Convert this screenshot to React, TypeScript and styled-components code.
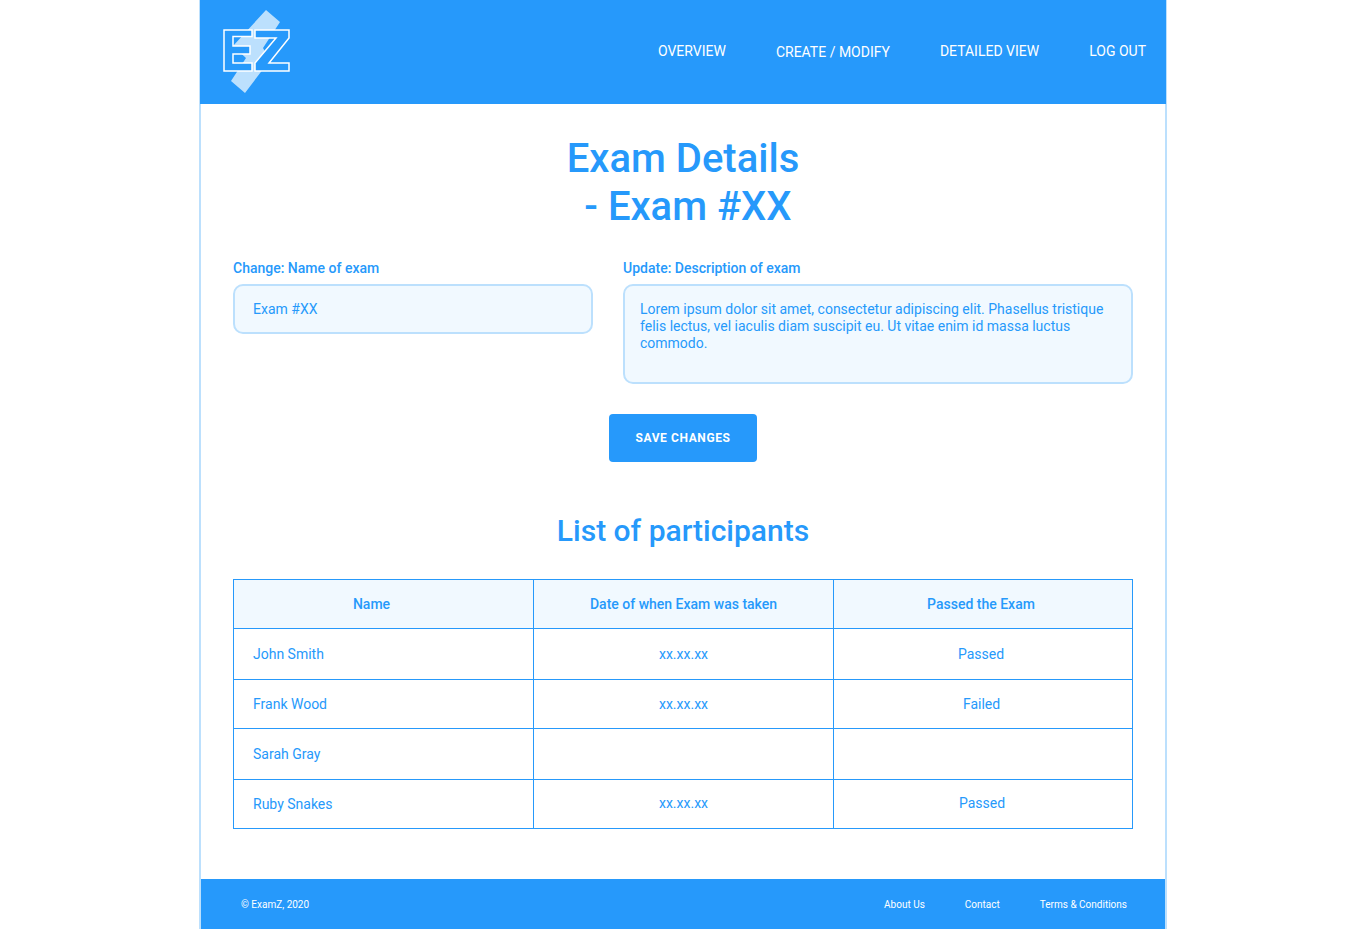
import React from 'react';
import styled, { createGlobalStyle } from 'styled-components';

const blue = '#2699fb';
const paleBlue = '#f1f9ff';
const edgeBlue = '#bce0fd';

const GlobalStyle = createGlobalStyle`
  html, body {
    margin: 0;
    padding: 0;
    background: #fff;
    font-family: Roboto, "Liberation Sans", sans-serif;
  }
  * {
    box-sizing: border-box;
  }
`;

const Page = styled.div`
  width: 968px;
  height: 929px;
  margin: 0 auto;
  display: flex;
  flex-direction: column;
  border-left: 2px solid ${edgeBlue};
  border-right: 2px solid ${edgeBlue};
`;

const Header = styled.header`
  height: 104px;
  margin: 0 -1px;
  padding: 0 20px 0 22px;
  background: ${blue};
  display: flex;
  align-items: center;
  justify-content: space-between;
`;

const Nav = styled.nav`
  display: flex;
  align-items: center;
  gap: 50px;
  margin-top: -2px;
`;

const NavLink = styled.a<{ $drop?: boolean }>`
  color: #fff;
  font-size: 14px;
  line-height: 16px;
  margin-top: ${(p) => (p.$drop ? '2px' : '0')};
`;

const Main = styled.main`
  flex: 1;
  padding: 31px 32px 0;
`;

const Title = styled.h1`
  margin: 0;
  color: ${blue};
  font-size: 40px;
  line-height: 48px;
  font-weight: 500;
  text-align: center;
`;

const FormRow = styled.div`
  display: flex;
  gap: 30px;
  margin-top: 29px;
`;

const Field = styled.div<{ $width: number }>`
  width: ${(p) => p.$width}px;
`;

const Label = styled.div`
  color: ${blue};
  font-size: 14px;
  font-weight: 500;
  line-height: 16px;
  margin-bottom: 8px;
`;

const NameBox = styled.div`
  height: 50px;
  padding: 0 18px;
  display: flex;
  align-items: center;
  color: ${blue};
  font-size: 14px;
  background: ${paleBlue};
  border: 2px solid ${edgeBlue};
  border-radius: 10px;
`;

const DescriptionBox = styled.div`
  height: 100px;
  padding: 15px;
  color: ${blue};
  font-size: 14px;
  line-height: 17px;
  background: ${paleBlue};
  border: 2px solid ${edgeBlue};
  border-radius: 10px;
`;

const SaveRow = styled.div`
  display: flex;
  justify-content: center;
  margin-top: 30px;
`;

const SaveButton = styled.button`
  width: 148px;
  height: 48px;
  border: 0;
  border-radius: 4px;
  background: ${blue};
  color: #fff;
  font-family: inherit;
  font-size: 12px;
  font-weight: 700;
  letter-spacing: 0.6px;
`;

const Subtitle = styled.h2`
  margin: 51px 0 0;
  color: ${blue};
  font-size: 30px;
  line-height: 36px;
  font-weight: 500;
  text-align: center;
`;

const Table = styled.div`
  margin-top: 30px;
  width: 900px;
  display: grid;
  grid-template-columns: 300px 300px 299px;
  grid-template-rows: 49px 51px 49px 51px 49px;
  border-top: 1px solid ${blue};
  border-left: 1px solid ${blue};
`;

const Cell = styled.div<{ $head?: boolean; $left?: boolean; $back?: number; $lift?: boolean }>`
  display: flex;
  align-items: center;
  justify-content: ${(p) => (p.$left ? 'flex-start' : 'center')};
  padding-left: ${(p) => (p.$left ? '19px' : '0')};
  padding-right: ${(p) => p.$back ?? 0}px;
  padding-bottom: ${(p) => (p.$lift ? '2px' : '0')};
  color: ${blue};
  font-size: 14px;
  font-weight: ${(p) => (p.$head ? 500 : 400)};
  background: ${(p) => (p.$head ? paleBlue : '#fff')};
  border-right: 1px solid ${blue};
  border-bottom: 1px solid ${blue};
`;

const Footer = styled.footer`
  height: 50px;
  padding: 0 38px 0 40px;
  background: ${blue};
  display: flex;
  align-items: center;
  justify-content: space-between;
  color: #fff;
  font-size: 10px;
`;

const FooterLinks = styled.div`
  display: flex;
  gap: 40px;
`;

const Logo = () => (
  <svg width="70" height="86" viewBox="0 0 70 86" aria-hidden="true">
    <path d="M44 1 L58 13 L41 39 L48 51 L23 84 L9 72 L24 49 L11 37 Z" fill={edgeBlue} />
    <path
      d="M2 21 H30 V27.5 H11 V37 H28 V45 H11 V54 H30 V62 H2 Z"
      fill={blue}
      stroke="#fff"
      strokeWidth="1.5"
    />
    <path
      d="M33 21 H67 V29 L47 54 H67 V62 H33 V54 L54 29 H33 Z"
      fill={blue}
      stroke="#fff"
      strokeWidth="1.5"
    />
  </svg>
);

const App: React.FC = () => (
  <>
    <GlobalStyle />
    <Page>
      <Header>
        <Logo />
        <Nav>
          <NavLink>OVERVIEW</NavLink>
          <NavLink $drop>CREATE / MODIFY</NavLink>
          <NavLink>DETAILED VIEW</NavLink>
          <NavLink>LOG OUT</NavLink>
        </Nav>
      </Header>
      <Main>
        <Title>
          Exam Details
          <br />
          &nbsp;- Exam #XX
        </Title>
        <FormRow>
          <Field $width={360}>
            <Label>Change: Name of exam</Label>
            <NameBox>Exam #XX</NameBox>
          </Field>
          <Field $width={510}>
            <Label>Update: Description of exam</Label>
            <DescriptionBox>
              Lorem ipsum dolor sit amet, consectetur adipiscing elit. Phasellus tristique felis
              lectus, vel iaculis diam suscipit eu. Ut vitae enim id massa luctus commodo.
            </DescriptionBox>
          </Field>
        </FormRow>
        <SaveRow>
          <SaveButton>SAVE CHANGES</SaveButton>
        </SaveRow>
        <Subtitle>List of participants</Subtitle>
        <Table>
          <Cell $head $back={24}>Name</Cell>
          <Cell $head>Date of when Exam was taken</Cell>
          <Cell $head $back={4}>Passed the Exam</Cell>
          <Cell $left>John Smith</Cell>
          <Cell>xx.xx.xx</Cell>
          <Cell $back={4}>Passed</Cell>
          <Cell $left>Frank Wood</Cell>
          <Cell>xx.xx.xx</Cell>
          <Cell $back={3}>Failed</Cell>
          <Cell $left>Sarah Gray</Cell>
          <Cell />
          <Cell />
          <Cell $left>Ruby Snakes</Cell>
          <Cell $lift>xx.xx.xx</Cell>
          <Cell $back={2} $lift>Passed</Cell>
        </Table>
      </Main>
      <Footer>
        <span>© ExamZ, 2020</span>
        <FooterLinks>
          <span>About Us</span>
          <span>Contact</span>
          <span>Terms &amp; Conditions</span>
        </FooterLinks>
      </Footer>
    </Page>
  </>
);

export default App;
